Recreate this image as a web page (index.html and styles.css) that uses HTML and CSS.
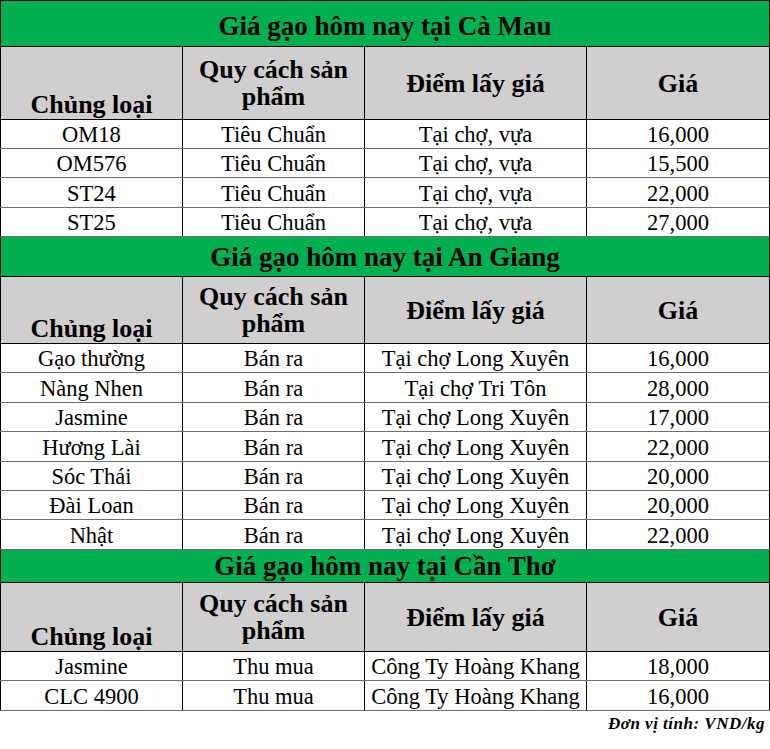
FILE: index.html
```html
<!DOCTYPE html>
<html lang="vi">
<head>
<meta charset="utf-8">
<title>Giá gạo hôm nay</title>
<link rel="stylesheet" href="styles.css">
</head>
<body>
<table class="price-table">
  <colgroup>
    <col class="c1"><col class="c2"><col class="c3"><col class="c4">
  </colgroup>
  <tbody>
    <tr class="title t1"><td colspan="4">Giá gạo hôm nay tại Cà Mau</td></tr>
    <tr class="head h1">
      <th class="first">Chủng loại</th><th>Quy cách sản phẩm</th><th>Điểm lấy giá</th><th>Giá</th>
    </tr>
    <tr class="r29"><td>OM18</td><td>Tiêu Chuẩn</td><td>Tại chợ, vựa</td><td>16,000</td></tr>
    <tr class="r29"><td>OM576</td><td>Tiêu Chuẩn</td><td>Tại chợ, vựa</td><td>15,500</td></tr>
    <tr class="r30"><td>ST24</td><td>Tiêu Chuẩn</td><td>Tại chợ, vựa</td><td>22,000</td></tr>
    <tr class="r29"><td>ST25</td><td>Tiêu Chuẩn</td><td>Tại chợ, vựa</td><td>27,000</td></tr>

    <tr class="title t2"><td colspan="4">Giá gạo hôm nay tại An Giang</td></tr>
    <tr class="head h2">
      <th class="first">Chủng loại</th><th>Quy cách sản phẩm</th><th>Điểm lấy giá</th><th>Giá</th>
    </tr>
    <tr class="r29"><td>Gạo thường</td><td>Bán ra</td><td>Tại chợ Long Xuyên</td><td>16,000</td></tr>
    <tr class="r30"><td>Nàng Nhen</td><td>Bán ra</td><td>Tại chợ Tri Tôn</td><td>28,000</td></tr>
    <tr class="r29"><td>Jasmine</td><td>Bán ra</td><td>Tại chợ Long Xuyên</td><td>17,000</td></tr>
    <tr class="r30"><td>Hương Lài</td><td>Bán ra</td><td>Tại chợ Long Xuyên</td><td>22,000</td></tr>
    <tr class="r29"><td>Sóc Thái</td><td>Bán ra</td><td>Tại chợ Long Xuyên</td><td>20,000</td></tr>
    <tr class="r29"><td>Đài Loan</td><td>Bán ra</td><td>Tại chợ Long Xuyên</td><td>20,000</td></tr>
    <tr class="r30"><td>Nhật</td><td>Bán ra</td><td>Tại chợ Long Xuyên</td><td>22,000</td></tr>

    <tr class="title t3"><td colspan="4">Giá gạo hôm nay tại Cần Thơ</td></tr>
    <tr class="head h3">
      <th class="first">Chủng loại</th><th>Quy cách sản phẩm</th><th>Điểm lấy giá</th><th>Giá</th>
    </tr>
    <tr class="r28"><td>Jasmine</td><td>Thu mua</td><td>Công Ty Hoàng Khang</td><td>18,000</td></tr>
    <tr class="r30"><td>CLC 4900</td><td>Thu mua</td><td>Công Ty Hoàng Khang</td><td>16,000</td></tr>
  </tbody>
</table>
<p class="unit">Đơn vị tính: VND/kg</p>
</body>
</html>
```

FILE: styles.css
```css
html, body {
  margin: 0;
  padding: 0;
  background: #ffffff;
}

body {
  font-family: "Liberation Serif", "Times New Roman", serif;
  color: #000000;
}

.price-table {
  border-collapse: collapse;
  table-layout: fixed;
  width: 769px;
}

.c1 { width: 182px; }
.c2 { width: 182px; }
.c3 { width: 222px; }
.c4 { width: 183px; }

.price-table td,
.price-table th {
  border: 1px solid #000000;
  padding: 0;
  text-align: center;
  overflow: hidden;
  white-space: nowrap;
}

.title td {
  background: #00b050;
  font-weight: bold;
  font-size: 27px;
  line-height: 30px;
}

.t1 { height: 46px; }
.t2 { height: 40px; }
.t3 { height: 33px; }

.t1 td { padding-top: 4px; }

.head th {
  background: #d0cece;
  font-weight: bold;
  font-size: 26px;
  line-height: 27px;
  vertical-align: middle;
  white-space: normal;
}

.head th.first {
  vertical-align: bottom;
  padding-bottom: 1px;
}

.h1 { height: 73px; }
.h2 { height: 67px; }
.h3 { height: 69px; }

.price-table tr[class^="r"] td {
  font-size: 22.5px;
  line-height: 26px;
  padding-top: 2px;
  vertical-align: middle;
  border-color: #1a1a1a #000000 #6e6e6e #000000;
}

.r28 { height: 28px; }
.r29 { height: 29px; }
.r30 { height: 30px; }

.unit {
  margin: 3px 5px 0 0;
  text-align: right;
  font-weight: bold;
  font-style: italic;
  font-size: 17px;
  line-height: 20px;
  letter-spacing: 0.5px;
}
```
